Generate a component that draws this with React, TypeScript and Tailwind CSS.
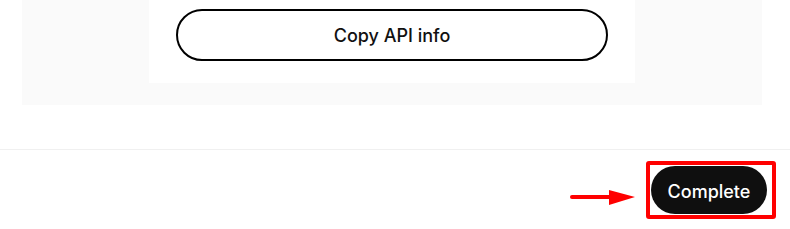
export default function App() {
  return (
    <div className="w-[790px] h-[229px] bg-white overflow-hidden relative font-['Inter','Liberation_Sans',sans-serif]">
      {/* ── Card area ── */}
      <div className="pl-[22px] pr-[28px]">
        <div className="bg-[#fafafa] flex justify-center pb-[22px]">
          <div className="w-[486px] bg-white flex justify-center pt-[9px] pb-[22px]">
            <button className="w-[432px] h-[52px] pt-[1px] rounded-full border-2 border-black bg-white text-[18px] font-medium text-[#111]">
              Copy API info
            </button>
          </div>
        </div>
      </div>

      {/* Divider */}
      <div className="mt-[44px] h-px bg-[#f0f0f0]" />

      {/* ── Footer ── */}
      <div className="flex justify-end pt-[16px] pr-[23px]">
        <button className="w-[116px] h-[48px] pt-[3px] rounded-full bg-[#0f0f0f] text-white text-[18px] font-medium">
          Complete
        </button>
      </div>

      {/* Annotation: highlight box */}
      <div className="absolute left-[646px] top-[161px] w-[130px] h-[58px] border-[4px] border-[#ff0000] rounded-[3px]" />

      {/* Annotation: arrow */}
      <svg className="absolute left-[566px] top-[186px]" width="72" height="22" viewBox="0 0 72 22">
        <line x1="6" y1="11" x2="46" y2="11" stroke="#ff0000" strokeWidth="4" strokeLinecap="round" />
        <polygon points="43,4 69,11 43,19" fill="#ff0000" />
      </svg>
    </div>
  );
}
